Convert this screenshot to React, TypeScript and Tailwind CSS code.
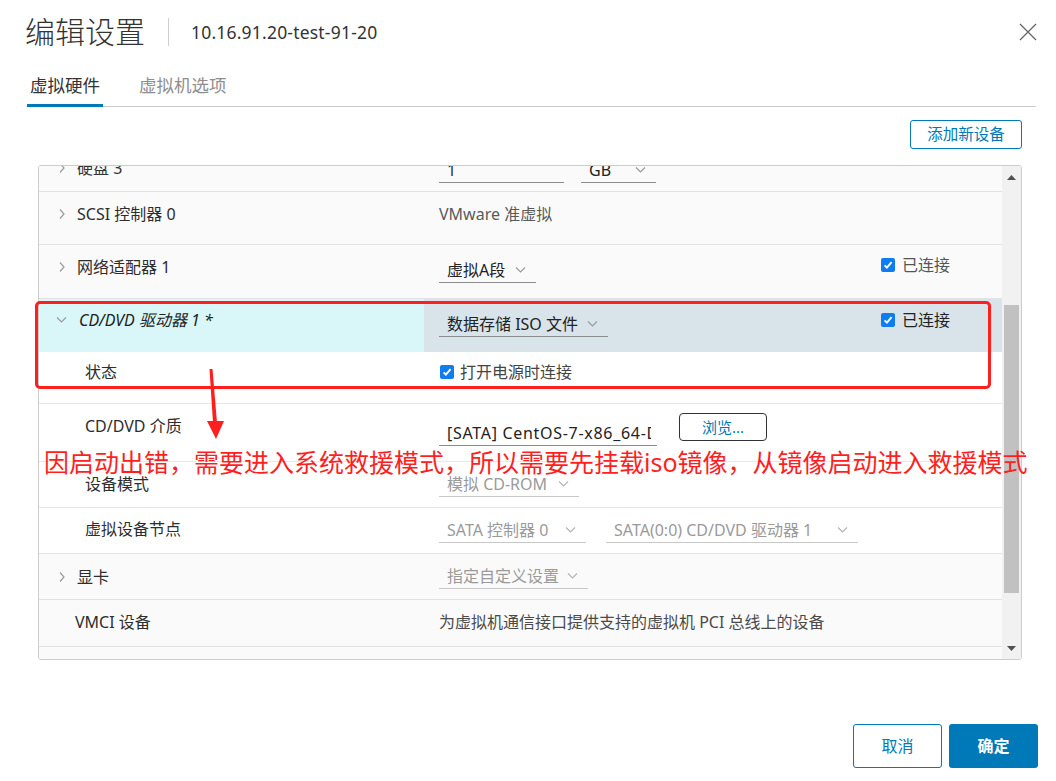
import React from 'react';

function ChevronRight() {
  return (
    <svg width="8" height="12" viewBox="0 0 8 12" className="shrink-0">
      <path d="M2 1.5l4 4.5-4 4.5" fill="none" stroke="#9b9b9b" strokeWidth="1.2" />
    </svg>
  );
}

function ChevronDown({ color = '#9b9b9b' }: { color?: string }) {
  return (
    <svg width="11" height="8" viewBox="0 0 11 8" className="shrink-0">
      <path d="M1 1.5l4.5 4.5 4.5-4.5" fill="none" stroke={color} strokeWidth="1.2" />
    </svg>
  );
}

function Checkbox() {
  return (
    <span className="inline-flex w-[14px] h-[14px] rounded-[2px] bg-[#0f7cf0] items-center justify-center shrink-0">
      <svg width="10" height="10" viewBox="0 0 10 10">
        <path d="M1.6 5.3l2.3 2.3L8.6 2.2" stroke="#fff" strokeWidth="1.9" fill="none" />
      </svg>
    </span>
  );
}

interface SelectProps {
  text: string;
  width: string;
  disabled?: boolean;
}

function Select({ text, width, disabled }: SelectProps) {
  return (
    <div
      className={`inline-flex items-center justify-between h-[26px] pl-2 pr-[10px] border-b ${width} ${
        disabled ? 'border-[#c8c8c8] text-[#9a9a9a]' : 'border-[#8c8c8c] text-[#222]'
      }`}
    >
      <span className="text-[16px] leading-[22px] whitespace-nowrap">{text}</span>
      <ChevronDown color={disabled ? '#b5b5b5' : '#9b9b9b'} />
    </div>
  );
}

export default function App() {
  return (
    <div className="relative w-[1056px] h-[781px] bg-white overflow-hidden font-['Noto_Sans','Noto_Sans_CJK_SC',sans-serif] text-[#333]">
      {/* Header */}
      <div className="flex items-center h-[64px] pl-[25px] pr-[18px]">
        <h1 className="text-[30px] leading-[40px] font-light text-[#333]">编辑设置</h1>
        <div className="ml-[23px] w-px h-[28px] bg-[#cfcfcf]" />
        <div className="ml-[22px] text-[17.5px] tracking-[0.2px] text-[#333]">10.16.91.20-test-91-20</div>
        <button className="ml-auto w-[20px] h-[20px] flex items-center justify-center">
          <svg width="18" height="18" viewBox="0 0 18 18">
            <path d="M1 1l16 16M17 1L1 17" stroke="#666" strokeWidth="1.3" />
          </svg>
        </button>
      </div>

      {/* Tabs */}
      <div className="ml-[27px] mr-[20px] h-[43px] flex border-b border-[#cccccc]">
        <div className="px-[3px] h-[43px] flex items-center border-b-[3px] border-[#0079b8] pt-[3px] text-[17.5px] text-[#333]">
          虚拟硬件
        </div>
        <div className="ml-[36px] h-[43px] flex items-center text-[17.5px] text-[#8e8e8e]">虚拟机选项</div>
      </div>

      {/* Add device */}
      <div className="flex justify-end pr-[34px] mt-[13px]">
        <button className="w-[112px] h-[29px] border border-[#0079b8] rounded-[3px] text-[15.5px] text-[#0079b8] flex items-center justify-center">
          添加新设备
        </button>
      </div>

      {/* Hardware list */}
      <div className="ml-[38px] mt-[16px] w-[984px] h-[495px] border border-[#cccccc] rounded-[3px] overflow-hidden flex">
        <div className="w-[963px] flex flex-col text-[16px] leading-[22px]">
          {/* 硬盘 3 (scrolled) */}
          <div className="h-[26px] shrink-0 flex items-start bg-[#fafafa] border-b border-[#e3e3e3]">
            <div className="w-[385px] -mt-[9px] flex items-center pl-[19px] gap-[11px]">
              <ChevronRight />
              <span>硬盘 3</span>
            </div>
            <div className="flex-1 -mt-[9px] pl-[15px] flex items-start">
              <div className="w-[125px] h-[26px] border-b border-[#8c8c8c] pl-2 flex items-center">1</div>
              <div className="ml-[17px]">
                <Select text="GB" width="w-[75px]" />
              </div>
            </div>
          </div>

          {/* SCSI */}
          <div className="h-[53px] shrink-0 flex items-start bg-[#fafafa] border-b border-[#e3e3e3]">
            <div className="w-[385px] pt-[11px] flex items-center pl-[19px] gap-[11px]">
              <ChevronRight />
              <span className="text-[#2d2d2d]">SCSI 控制器 0</span>
            </div>
            <div className="flex-1 pt-[11px] pl-[15px] text-[#5a5a5a]">VMware 准虚拟</div>
          </div>

          {/* 网络适配器 */}
          <div className="h-[54px] shrink-0 flex items-start bg-[#fafafa] border-b border-[#e3e3e3]">
            <div className="w-[385px] pt-[11px] flex items-center pl-[19px] gap-[11px]">
              <ChevronRight />
              <span className="text-[#2d2d2d]">网络适配器 1</span>
            </div>
            <div className="flex-1 flex items-start pl-[15px]">
              <div className="flex-1 pt-[12px]">
                <Select text="虚拟A段" width="w-[97px]" />
              </div>
              <div className="w-[121px] pt-[9px] flex items-center gap-[7px] text-[#555]">
                <Checkbox />
                <span>已连接</span>
              </div>
            </div>
          </div>

          {/* CD/DVD 驱动器 */}
          <div className="h-[53px] shrink-0 flex items-stretch">
            <div className="w-[385px] bg-[#d9f7f8] pt-[10px] pl-[17px]">
              <div className="flex items-center gap-[12px]">
                <ChevronDown />
                <span className="italic text-[#222]">CD/DVD 驱动器 1 *</span>
              </div>
            </div>
            <div className="flex-1 bg-[#d8e3ea] flex items-start pl-[15px]">
              <div className="flex-1 pt-[12px]">
                <Select text="数据存储 ISO 文件" width="w-[169px]" />
              </div>
              <div className="w-[121px] pt-[10px] flex items-center gap-[7px] text-[#222]">
                <Checkbox />
                <span>已连接</span>
              </div>
            </div>
          </div>

          {/* 状态 */}
          <div className="h-[52px] shrink-0 flex items-start bg-white border-b border-[#e8e8e8]">
            <div className="w-[385px] pt-[9px] pl-[46px] text-[#2d2d2d]">状态</div>
            <div className="flex-1 pt-[9px] pl-[16px] flex items-center gap-[6px] text-[#444]">
              <Checkbox />
              <span>打开电源时连接</span>
            </div>
          </div>

          {/* CD/DVD 介质 */}
          <div className="h-[58px] shrink-0 flex items-start bg-white border-b border-[#e8e8e8]">
            <div className="w-[385px] pt-[11px] pl-[46px] text-[#2d2d2d]">CD/DVD 介质</div>
            <div className="flex-1 pl-[15px] flex items-start">
              <div className="mt-[16px] w-[218px] h-[26px] border-b border-[#8c8c8c] pl-2 pr-[6px] flex items-center">
                <span className="block min-w-0 flex-1 overflow-hidden whitespace-nowrap tracking-[0.7px] text-[#222]">
                  [SATA] CentOS-7-x86_64-DVD-2009.iso
                </span>
              </div>
              <button className="mt-[9px] ml-[22px] w-[88px] h-[28px] border-[1.5px] border-[#333] rounded-[4px] text-[15px] text-[#0079b8] flex items-center justify-center">
                浏览...
              </button>
            </div>
          </div>

          {/* 设备模式 */}
          <div className="h-[46px] shrink-0 flex items-start bg-white border-b border-[#e8e8e8]">
            <div className="w-[385px] pt-[11px] pl-[46px] text-[#2d2d2d]">设备模式</div>
            <div className="flex-1 pt-[9px] pl-[15px]">
              <Select text="模拟 CD-ROM" width="w-[140px]" disabled />
            </div>
          </div>

          {/* 虚拟设备节点 */}
          <div className="h-[46px] shrink-0 flex items-start bg-white border-b border-[#e3e3e3]">
            <div className="w-[385px] pt-[10px] pl-[46px] text-[#2d2d2d]">虚拟设备节点</div>
            <div className="flex-1 pt-[9px] pl-[15px] flex gap-[20px]">
              <Select text="SATA 控制器 0" width="w-[147px]" disabled />
              <Select text="SATA(0:0) CD/DVD 驱动器 1" width="w-[252px]" disabled />
            </div>
          </div>

          {/* 显卡 */}
          <div className="h-[46px] shrink-0 flex items-start bg-[#fafafa] border-b border-[#e3e3e3]">
            <div className="w-[385px] pt-[12px] flex items-center pl-[19px] gap-[11px]">
              <ChevronRight />
              <span className="text-[#2d2d2d]">显卡</span>
            </div>
            <div className="flex-1 pt-[9px] pl-[15px]">
              <Select text="指定自定义设置" width="w-[149px]" disabled />
            </div>
          </div>

          {/* VMCI */}
          <div className="h-[47px] shrink-0 flex items-start bg-[#fafafa] border-b border-[#e3e3e3]">
            <div className="w-[385px] pt-[11px] pl-[36px] text-[#2d2d2d]">VMCI 设备</div>
            <div className="flex-1 pt-[11px] pl-[15px] text-[#4a4a4a]">为虚拟机通信接口提供支持的虚拟机 PCI 总线上的设备</div>
          </div>

          <div className="flex-1 bg-[#fafafa]" />
        </div>

        {/* Scrollbar */}
        <div className="w-[19px] bg-[#f1f1f1] flex flex-col items-center">
          <div className="h-[22px] w-full flex items-center justify-center">
            <svg width="9" height="5" viewBox="0 0 9 5">
              <path d="M0 5L4.5 0 9 5z" fill="#505050" />
            </svg>
          </div>
          <div className="mt-[117px] w-[15px] h-[288px] bg-[#c1c1c1]" />
          <div className="flex-1" />
          <div className="h-[22px] w-full flex items-center justify-center">
            <svg width="9" height="5" viewBox="0 0 9 5">
              <path d="M0 0L4.5 5 9 0z" fill="#505050" />
            </svg>
          </div>
        </div>
      </div>

      {/* Footer */}
      <div className="flex justify-end pr-[18px] mt-[64px] gap-[7px]">
        <button className="w-[89px] h-[44px] border border-[#0079b8] rounded-[3px] text-[16px] text-[#0079b8] bg-white">
          取消
        </button>
        <button className="w-[89px] h-[44px] rounded-[3px] text-[16px] font-semibold text-white bg-[#0079b8]">
          确定
        </button>
      </div>

      {/* Annotation overlay */}
      <div className="absolute left-[35px] top-[301px] w-[956px] h-[88px] border-[3px] border-[#ff1f1f] rounded-[5px]" />
      <svg className="absolute left-[200px] top-[365px]" width="30" height="80" viewBox="0 0 30 80">
        <polygon points="9.5,4 12.5,4 17,58 13,58" fill="#ff1f1f" />
        <polygon points="7,56 24,56 16,74" fill="#ff1f1f" />
      </svg>
      <div className="absolute left-[44px] top-[447px] text-[25px] leading-[30px] text-[#ff1f1f] whitespace-nowrap">
        因启动出错，需要进入系统救援模式，所以需要先挂载iso镜像，从镜像启动进入救援模式
      </div>
    </div>
  );
}
